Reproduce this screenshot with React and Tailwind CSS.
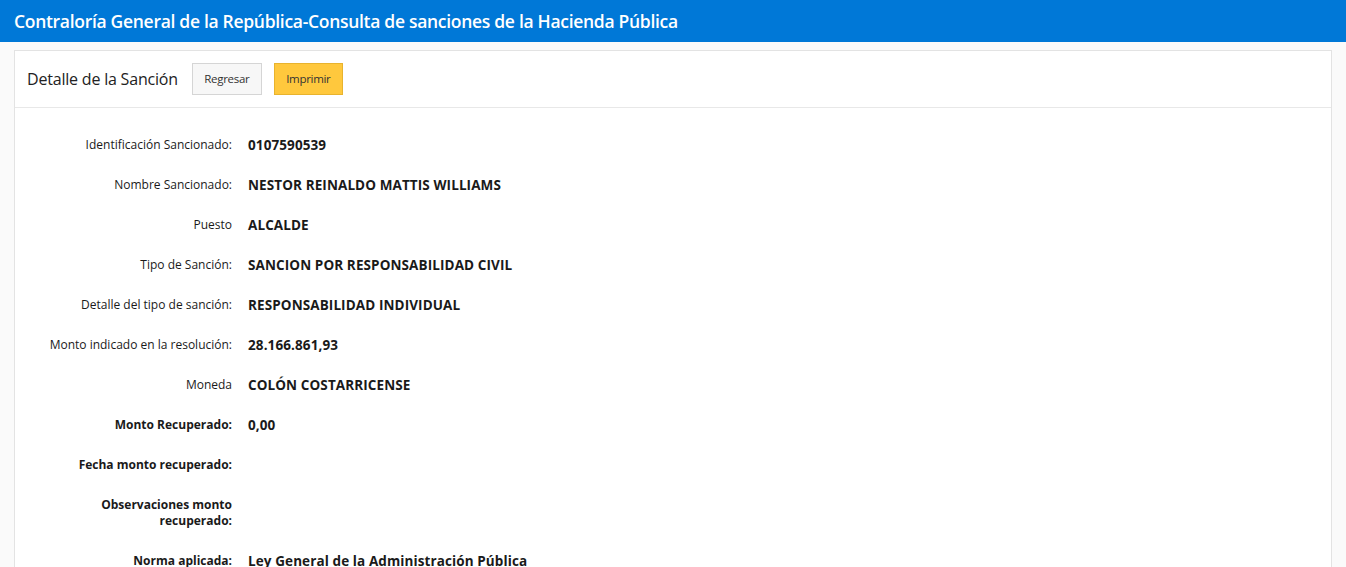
const rows = [
  { label: "Identificación Sancionado:", value: "0107590539" },
  { label: "Nombre Sancionado:", value: "NESTOR REINALDO MATTIS WILLIAMS" },
  { label: "Puesto", value: "ALCALDE" },
  { label: "Tipo de Sanción:", value: "SANCION POR RESPONSABILIDAD CIVIL" },
  { label: "Detalle del tipo de sanción:", value: "RESPONSABILIDAD INDIVIDUAL" },
  { label: "Monto indicado en la resolución:", value: "28.166.861,93" },
  { label: "Moneda", value: "COLÓN COSTARRICENSE" },
  { label: "Monto Recuperado:", value: "0,00", bold: true },
  { label: "Fecha monto recuperado:", value: "", bold: true },
  { label: "Observaciones monto recuperado:", value: "", bold: true },
  { label: "Norma aplicada:", value: "Ley General de la Administración Pública", bold: true },
];

export default function App() {
  return (
    <div className="min-h-screen bg-[#fafafa] text-[#222]" style={{ fontFamily: '"Open Sans", "Noto Sans", sans-serif' }}>
      <div className="flex h-[42px] items-center bg-[#0078d7] px-[14px]">
        <h1 className="text-[17.5px] font-semibold tracking-[-0.3px] text-white">
          Contraloría General de la República-Consulta de sanciones de la Hacienda Pública
        </h1>
      </div>
      <div className="mx-[14px] mt-2 border border-[#e3e3e3] bg-white">
        <div className="flex h-[57px] items-center border-b border-[#e8e8e8] px-3">
          <h2 className="text-[16px] tracking-[-0.2px] text-[#222]">Detalle de la Sanción</h2>
          <button type="button" className="ml-[14px] h-8 w-[70px] border border-[#d5d5d5] bg-[#f7f7f7] text-[11.5px] tracking-[-0.3px] text-[#333]">
            Regresar
          </button>
          <button type="button" className="ml-3 h-8 w-[69px] border border-[#e8b32e] bg-[#ffc83d] text-[11.5px] tracking-[-0.3px] text-[#333]">
            Imprimir
          </button>
        </div>
        <div className="pb-4 pt-[17px]">
          {rows.map((row) => (
            <div key={row.label} className="flex py-3 leading-4">
              <div
                className={`w-[217px] shrink-0 pl-[20px] text-right text-[12px] text-[#1a1a1a] ${row.bold ? "font-bold" : "font-medium"}`}
              >
                {row.label}
              </div>
              <div className="pl-4 text-[13.5px] font-bold tracking-[0.1px] text-[#1a1a1a]">{row.value}</div>
            </div>
          ))}
        </div>
      </div>
    </div>
  );
}
